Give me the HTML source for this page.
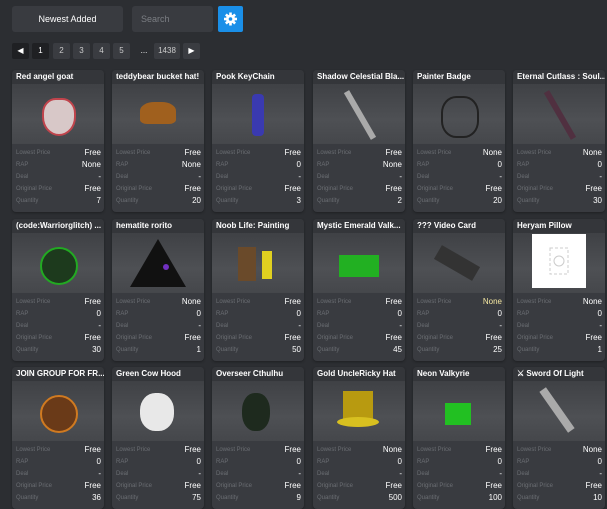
<!DOCTYPE html>
<html><head><style>
body{margin:0;width:607px;height:500px;background:#2c2e32;font-family:"Liberation Sans",sans-serif;overflow:hidden;position:relative}
.a{position:absolute}
.btn{background:#393b40;border-radius:3px;color:#fff;font-size:9px;text-align:center;line-height:26px}
.pg{position:absolute;top:43px;height:16px;background:#3a3c41;color:#ccc;font-size:8px;line-height:16px;text-align:center;border-radius:2px}
.c{position:absolute;width:92px;height:142px;background:#393b40;border-radius:4px;overflow:hidden;box-shadow:0 1px 2px #1f2023}
.t{height:14px;line-height:14px;padding-left:4px;color:#fff;font-size:8px;font-weight:bold;white-space:nowrap;overflow:hidden;background:#34363a}
.im{height:60px;background:linear-gradient(#3f4145,#4e5054 60%,#45474b);position:relative}
.s{padding:3px 3px 0 4px}
.r{display:flex;justify-content:space-between;height:12px;line-height:12px;font-size:6px;color:#6b6e73}
.r b{color:#fff;font-size:8px;font-weight:normal}
</style></head><body>
<div class="a btn" style="left:12px;top:6px;width:111px;height:26px">Newest Added</div>
<div class="a btn" style="left:132px;top:6px;width:81px;height:26px;color:#7b7e83;text-align:left;padding-left:9px;box-sizing:border-box">Search</div>
<div class="a" style="left:218px;top:6px;width:25px;height:26px;background:#1a8fe8;border-radius:2px"><svg width="25" height="26" viewBox="0 0 25 26"><g fill="#fff"><circle cx="12.5" cy="13" r="4.5"/><g stroke="#fff" stroke-width="2.6"><line x1="12.5" y1="6.5" x2="12.5" y2="19.5"/><line x1="6" y1="13" x2="19" y2="13"/><line x1="7.9" y1="8.4" x2="17.1" y2="17.6"/><line x1="17.1" y1="8.4" x2="7.9" y2="17.6"/></g></g><circle cx="12.5" cy="13" r="1.8" fill="#1a8fe8"/></svg></div>
<div class="pg" style="left:12px;width:17px;background:#1f2023;color:#fff">◀</div>
<div class="pg" style="left:32px;width:17px;background:#1f2023;color:#fff">1</div>
<div class="pg" style="left:53px;width:17px">2</div>
<div class="pg" style="left:73px;width:17px">3</div>
<div class="pg" style="left:93px;width:17px">4</div>
<div class="pg" style="left:113px;width:17px">5</div>
<div class="pg" style="left:137px;width:14px;background:none;color:#fff">...</div>
<div class="pg" style="left:154px;width:26px">1438</div>
<div class="pg" style="left:183px;width:17px;color:#fff">▶</div>

<div class="c" style="left:12px;top:70px"><div class="t">Red angel goat</div><div class="im"><div class="a" style="left:30px;top:14px;width:30px;height:34px;background:#d8c8c8;border-radius:40% 40% 50% 50%;border:2px solid #c0444c"></div></div><div class="s"><div class="r">Lowest Price<b>Free</b></div><div class="r">RAP<b>None</b></div><div class="r">Deal<b>-</b></div><div class="r">Original Price<b>Free</b></div><div class="r">Quantity<b>7</b></div></div></div>
<div class="c" style="left:112px;top:70px"><div class="t">teddybear bucket hat!</div><div class="im"><div class="a" style="left:28px;top:18px;width:36px;height:22px;background:#a0601e;border-radius:40% 40% 20% 20%"></div></div><div class="s"><div class="r">Lowest Price<b>Free</b></div><div class="r">RAP<b>None</b></div><div class="r">Deal<b>-</b></div><div class="r">Original Price<b>Free</b></div><div class="r">Quantity<b>20</b></div></div></div>
<div class="c" style="left:212px;top:70px"><div class="t">Pook KeyChain</div><div class="im"><div class="a" style="left:40px;top:10px;width:12px;height:42px;background:#3a3ab0;border-radius:4px"></div></div><div class="s"><div class="r">Lowest Price<b>Free</b></div><div class="r">RAP<b>0</b></div><div class="r">Deal<b>-</b></div><div class="r">Original Price<b>Free</b></div><div class="r">Quantity<b>3</b></div></div></div>
<div class="c" style="left:313px;top:70px"><div class="t">Shadow Celestial Bla...</div><div class="im"><div class="a" style="left:44px;top:4px;width:6px;height:54px;background:#aaa;transform:rotate(-30deg)"></div></div><div class="s"><div class="r">Lowest Price<b>Free</b></div><div class="r">RAP<b>None</b></div><div class="r">Deal<b>-</b></div><div class="r">Original Price<b>Free</b></div><div class="r">Quantity<b>2</b></div></div></div>
<div class="c" style="left:413px;top:70px"><div class="t">Painter Badge</div><div class="im"><div class="a" style="left:28px;top:12px;width:34px;height:38px;border:2px solid #222;border-radius:40%"></div></div><div class="s"><div class="r">Lowest Price<b>None</b></div><div class="r">RAP<b>0</b></div><div class="r">Deal<b>-</b></div><div class="r">Original Price<b>Free</b></div><div class="r">Quantity<b>20</b></div></div></div>
<div class="c" style="left:513px;top:70px"><div class="t">Eternal Cutlass : Soul...</div><div class="im"><div class="a" style="left:44px;top:4px;width:6px;height:54px;background:#503040;transform:rotate(-30deg)"></div></div><div class="s"><div class="r">Lowest Price<b>None</b></div><div class="r">RAP<b>0</b></div><div class="r">Deal<b>-</b></div><div class="r">Original Price<b>Free</b></div><div class="r">Quantity<b>30</b></div></div></div>

<div class="c" style="left:12px;top:219px"><div class="t">(code:Warriorglitch) ...</div><div class="im"><div class="a" style="left:28px;top:14px;width:34px;height:34px;background:#1d3a1d;border-radius:50%;border:2px solid #2a2"></div></div><div class="s"><div class="r">Lowest Price<b>Free</b></div><div class="r">RAP<b>0</b></div><div class="r">Deal<b>-</b></div><div class="r">Original Price<b>Free</b></div><div class="r">Quantity<b>30</b></div></div></div>
<div class="c" style="left:112px;top:219px"><div class="t">hematite rorito</div><div class="im"><svg class="a" style="left:16px;top:4px" width="60" height="52"><polygon points="30,2 58,50 2,50" fill="#111"/><circle cx="38" cy="30" r="3" fill="#7030c0"/></svg></div><div class="s"><div class="r">Lowest Price<b>None</b></div><div class="r">RAP<b>0</b></div><div class="r">Deal<b>-</b></div><div class="r">Original Price<b>Free</b></div><div class="r">Quantity<b>1</b></div></div></div>
<div class="c" style="left:212px;top:219px"><div class="t">Noob Life: Painting</div><div class="im"><div class="a" style="left:26px;top:14px;width:18px;height:34px;background:#6a4a2a"></div><div class="a" style="left:50px;top:18px;width:10px;height:28px;background:#e0d020"></div></div><div class="s"><div class="r">Lowest Price<b>Free</b></div><div class="r">RAP<b>0</b></div><div class="r">Deal<b>-</b></div><div class="r">Original Price<b>Free</b></div><div class="r">Quantity<b>50</b></div></div></div>
<div class="c" style="left:313px;top:219px"><div class="t">Mystic Emerald Valk...</div><div class="im"><div class="a" style="left:26px;top:22px;width:40px;height:22px;background:#22b022"></div></div><div class="s"><div class="r">Lowest Price<b>Free</b></div><div class="r">RAP<b>0</b></div><div class="r">Deal<b>-</b></div><div class="r">Original Price<b>Free</b></div><div class="r">Quantity<b>45</b></div></div></div>
<div class="c" style="left:413px;top:219px"><div class="t">??? Video Card</div><div class="im"><div class="a" style="left:22px;top:22px;width:44px;height:16px;background:#333;transform:rotate(30deg)"></div></div><div class="s"><div class="r">Lowest Price<b style="color:#f3e6a0">None</b></div><div class="r">RAP<b>0</b></div><div class="r">Deal<b>-</b></div><div class="r">Original Price<b>Free</b></div><div class="r">Quantity<b>25</b></div></div></div>
<div class="c" style="left:513px;top:219px"><div class="t">Heryam Pillow</div><div class="im"><div class="a" style="left:19px;top:1px;width:54px;height:54px;background:#fff"><svg width="54" height="54"><rect x="18" y="14" width="18" height="26" fill="none" stroke="#ccc" stroke-dasharray="3,2"/><circle cx="27" cy="27" r="5" fill="none" stroke="#ccc"/></svg></div></div><div class="s"><div class="r">Lowest Price<b>None</b></div><div class="r">RAP<b>0</b></div><div class="r">Deal<b>-</b></div><div class="r">Original Price<b>Free</b></div><div class="r">Quantity<b>1</b></div></div></div>

<div class="c" style="left:12px;top:367px"><div class="t">JOIN GROUP FOR FR...</div><div class="im"><div class="a" style="left:28px;top:14px;width:34px;height:34px;background:#6a3a18;border-radius:50%;border:2px solid #d07a20"></div></div><div class="s"><div class="r">Lowest Price<b>Free</b></div><div class="r">RAP<b>0</b></div><div class="r">Deal<b>-</b></div><div class="r">Original Price<b>Free</b></div><div class="r">Quantity<b>36</b></div></div></div>
<div class="c" style="left:112px;top:367px"><div class="t">Green Cow Hood</div><div class="im"><div class="a" style="left:28px;top:12px;width:34px;height:38px;background:#e8e8e8;border-radius:45%"></div></div><div class="s"><div class="r">Lowest Price<b>Free</b></div><div class="r">RAP<b>0</b></div><div class="r">Deal<b>-</b></div><div class="r">Original Price<b>Free</b></div><div class="r">Quantity<b>75</b></div></div></div>
<div class="c" style="left:212px;top:367px"><div class="t">Overseer Cthulhu</div><div class="im"><div class="a" style="left:30px;top:12px;width:28px;height:38px;background:#1e2a1e;border-radius:45%"></div></div><div class="s"><div class="r">Lowest Price<b>Free</b></div><div class="r">RAP<b>0</b></div><div class="r">Deal<b>-</b></div><div class="r">Original Price<b>Free</b></div><div class="r">Quantity<b>9</b></div></div></div>
<div class="c" style="left:313px;top:367px"><div class="t">Gold UncleRicky Hat</div><div class="im"><div class="a" style="left:30px;top:10px;width:30px;height:30px;background:#b89a10"></div><div class="a" style="left:24px;top:36px;width:42px;height:10px;background:#d8c020;border-radius:50%"></div></div><div class="s"><div class="r">Lowest Price<b>None</b></div><div class="r">RAP<b>0</b></div><div class="r">Deal<b>-</b></div><div class="r">Original Price<b>Free</b></div><div class="r">Quantity<b>500</b></div></div></div>
<div class="c" style="left:413px;top:367px"><div class="t">Neon Valkyrie</div><div class="im"><div class="a" style="left:32px;top:22px;width:26px;height:22px;background:#22c022"></div></div><div class="s"><div class="r">Lowest Price<b>Free</b></div><div class="r">RAP<b>0</b></div><div class="r">Deal<b>-</b></div><div class="r">Original Price<b>Free</b></div><div class="r">Quantity<b>100</b></div></div></div>
<div class="c" style="left:513px;top:367px"><div class="t">⚔ Sword Of Light</div><div class="im"><div class="a" style="left:40px;top:4px;width:8px;height:50px;background:#aaa;transform:rotate(-35deg)"></div></div><div class="s"><div class="r">Lowest Price<b>None</b></div><div class="r">RAP<b>0</b></div><div class="r">Deal<b>-</b></div><div class="r">Original Price<b>Free</b></div><div class="r">Quantity<b>10</b></div></div></div>
</body></html>
